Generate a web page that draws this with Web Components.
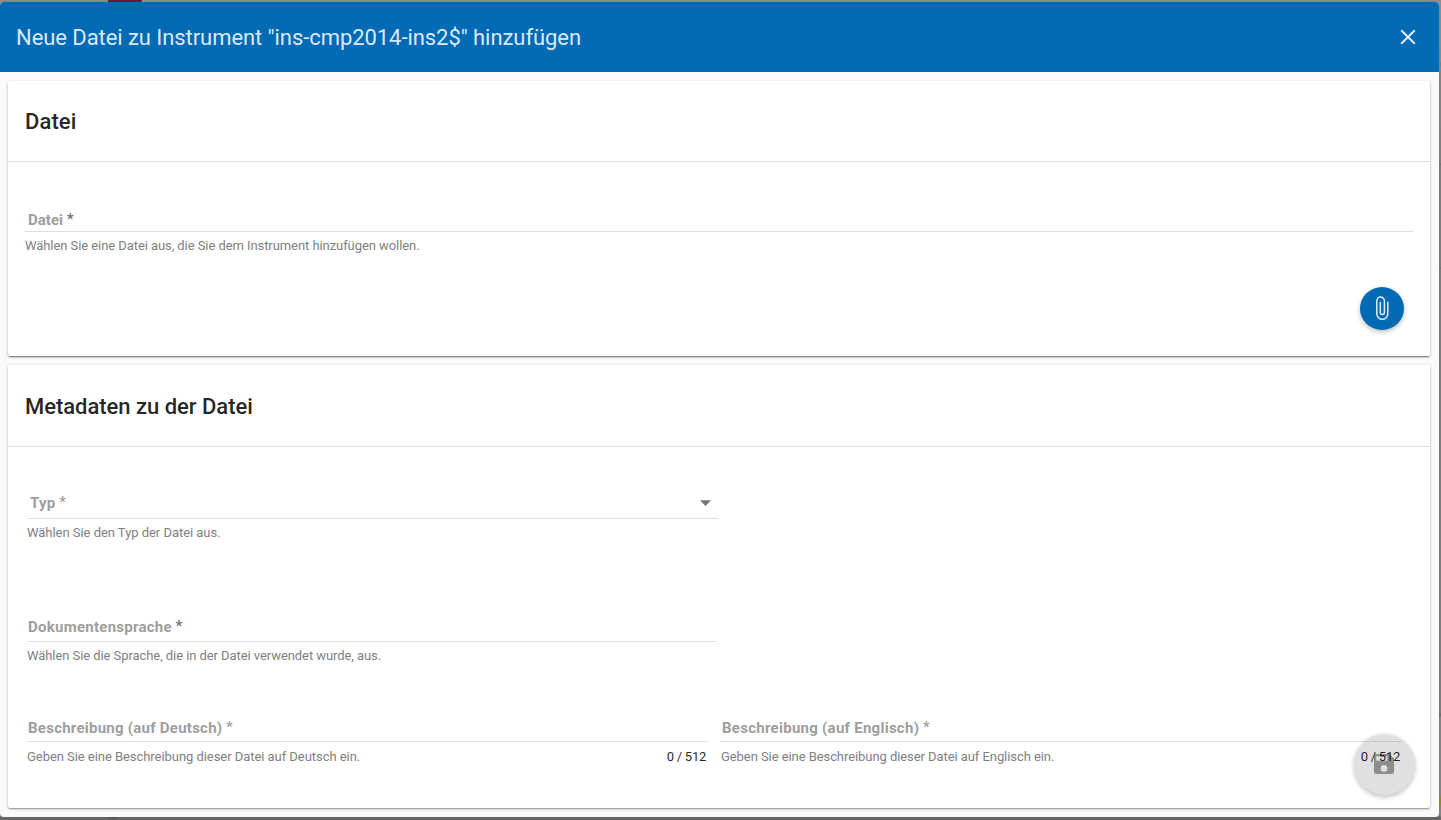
<!DOCTYPE html>
<html lang="de">
<head>
<meta charset="utf-8">
<title>Neue Datei hinzufügen</title>
<style>
html,body{margin:0;height:820px;overflow:hidden}
body{font-family:Roboto,"Liberation Sans",sans-serif;background:#878787;color:rgba(0,0,0,.87)}
</style>
</head>
<body>
<page-backdrop>
<app-dialog>
<span slot="title">Neue Datei zu Instrument "ins-cmp2014-ins2$" hinzufügen</span>
<form-card raised style="height:275px;--title-ls:.1px">
<span slot="title">Datei</span>
<form-field style="margin:49px 17px 0 17px;--gap:20px;--inset:3px;--ls:.02px" label="Datei" strong hint="Wählen Sie eine Datei aus, die Sie dem Instrument hinzufügen wollen."></form-field>
<attach-button></attach-button>
</form-card>
<form-card style="height:443px;--head:81px">
<span slot="title">Metadaten zu der Datei</span>
<form-field style="margin:47px 0 0 19px;width:691px;--gap:24px;--inset:3px;--hint-ls:-.035px" label="Typ" select hint="Wählen Sie den Typ der Datei aus."></form-field>
<form-field style="margin:77px 0 0 19px;width:690px;--gap:23px;--ls:.26px" label="Dokumentensprache" strong hint="Wählen Sie die Sprache, die in der Datei verwendet wurde, aus."></form-field>
<field-row>
<form-field style="--gap:22px;--drop:7px;--ls:.25px;--hint-ls:-.05px" label="Beschreibung (auf Deutsch)" counter="0 / 512" hint="Geben Sie eine Beschreibung dieser Datei auf Deutsch ein."></form-field>
<form-field style="--gap:22px;--drop:7px;--ls:.27px" label="Beschreibung (auf Englisch)" counter="0 / 512" hint="Geben Sie eine Beschreibung dieser Datei auf Englisch ein."></form-field>
</field-row>
</form-card>
<save-button slot="fab"></save-button>
</app-dialog>
</page-backdrop>
<script>
function define(name, html, setup) {
  customElements.define(name, class extends HTMLElement {
    connectedCallback() {
      if (this.shadowRoot) return;
      this.attachShadow({mode: 'open'}).innerHTML = html;
      if (setup) setup(this, this.shadowRoot);
    }
  });
}

define('page-backdrop', `<style>
:host{display:block;position:relative;height:820px;overflow:hidden;
 background:linear-gradient(#8d8d8d 0 3px,#8a8a8a 62px,#7b7b7b 63px 64px,#858585 65px,#808080 163px,#747474 164px 165px,#7e7e7e 166px 267px,#747474 268px,#7e7e7e 270px 713px,#6c6c6c 714px 716px,#858585 717px 816px,#676767 817px)}
i{position:absolute;display:block}
.red{left:108px;top:0;width:34px;height:3px;background:#761428}
.yel{right:0;top:795px;width:2px;height:11px;background:#8e8a3c}
.low{left:108px;top:817px;width:9px;height:3px;background:#5e5e5e}
</style><i class="red"></i><i class="yel"></i><i class="low"></i><slot></slot>`);

define('app-dialog', `<style>
:host{display:flex;flex-direction:column;position:relative;top:2px;width:1439px;height:815px;border-radius:4px;overflow:hidden;background:#fafafa;box-shadow:0 0 2px rgba(0,0,0,.1)}
header{display:flex;align-items:center;justify-content:space-between;flex:none;height:70px;box-sizing:border-box;padding:0 23px 0 16px;background:#006bb4;color:rgba(255,255,255,.87)}
h2{margin:2px 0 0;font-size:22px;font-weight:400;line-height:28px;letter-spacing:-.065px;white-space:nowrap}
button{border:0;padding:0;background:none;width:16px;height:16px;display:block}
svg{display:block}
main{display:flex;flex-direction:column;gap:9px;padding:9px 9px 9px 8px;position:relative;z-index:0}
</style>
<header><h2><slot name="title"></slot></h2><button aria-label="Schließen"><svg width="16" height="16" viewBox="0 0 16 16"><path d="M1.2 1.2 14.8 14.8M14.8 1.2 1.2 14.8" stroke="#fff" stroke-opacity=".87" stroke-width="2" fill="none"/></svg></button></header>
<main><slot></slot><slot name="fab"></slot></main>`);

define('form-card', `<style>
:host{display:flex;flex-direction:column;box-sizing:border-box;flex:none;background:#fff;border-radius:2px;box-shadow:0 1px 3px 0 rgba(0,0,0,.26),0 1px 1px 0 rgba(0,0,0,.14),0 2px 1px -1px rgba(0,0,0,.12)}
:host([raised]){box-shadow:0 1px 3px 0 rgba(0,0,0,.28),0 2px 1px -1px rgba(0,0,0,.22),0 2px 2px -1px rgba(0,0,0,.25)}
header{flex:none;display:flex;align-items:center;padding:2px 17px 0;height:calc(var(--head,80px) - 2px);border-bottom:1px solid #dfdfdf}
h3{margin:0;font-size:22px;font-weight:500;line-height:28px;letter-spacing:var(--title-ls,-.03px)}
</style><header><h3><slot name="title"></slot></h3></header><slot></slot>`);

define('field-row', `<style>
:host{display:grid;grid-template-columns:681px 681px;gap:13px;margin:55px 0 0 19px;position:relative;z-index:2}
</style><slot></slot>`);

define('form-field', `<style>
:host{display:block}
.top{display:flex;justify-content:space-between;height:var(--gap);border-bottom:1px solid rgba(0,0,0,.125);padding:0 7px 0 var(--inset,1px);line-height:18px;font-size:15px;color:#9e9e9e}
label{font-weight:700;letter-spacing:var(--ls,.23px);white-space:pre}
.star{font-weight:500;letter-spacing:0;position:relative;top:-1px}
:host([strong]) .star{color:#757575;font-weight:700}
svg{margin-top:6px}
.bottom{display:flex;justify-content:space-between;padding:var(--drop,6px) 2px 0 0;font-size:13px;line-height:16px;color:#808080;white-space:nowrap;letter-spacing:var(--hint-ls,-.07px)}
.count{color:rgba(0,0,0,.87);letter-spacing:-.25px}
</style><div class="top"><label><span class="name"></span><span class="star"> *</span></label></div>
<div class="bottom"><span class="hint"></span></div>`, (el, root) => {
  root.querySelector('.name').textContent = el.getAttribute('label');
  root.querySelector('.hint').textContent = el.getAttribute('hint');
  if (el.hasAttribute('counter')) {
    const c = document.createElement('span');
    c.className = 'count';
    c.textContent = el.getAttribute('counter');
    root.querySelector('.bottom').append(c);
  }
  if (el.hasAttribute('select')) {
    root.querySelector('.top').insertAdjacentHTML('beforeend',
      '<svg width="11" height="6" viewBox="0 0 11 6"><path d="M0 .3H11L5.5 6Z" fill="#757575"/></svg>');
  }
});

define('attach-button', `<style>
:host{display:block;align-self:flex-end;margin:33px 26px 0 0}
button{display:flex;align-items:center;justify-content:center;width:44px;height:43px;padding:0;border:0;border-radius:50%;background:#006bb4;box-shadow:0 2px 5px rgba(0,0,0,.26)}
svg{margin:-2px 0 0 0}
</style><button aria-label="Datei auswählen"><svg width="14" height="24" viewBox="0 0 14 24"><path d="M12.8 5.8V17.8A5.5 5.5 0 0 1 1.8 17.8V4.9A3.8 3.8 0 0 1 9.4 4.9V16.4A2.05 2.05 0 0 1 5.3 16.4V5.8" fill="none" stroke="#fff" stroke-opacity=".87" stroke-width="1.5"/></svg></button>`);

define('save-button', `<style>
:host{display:block;position:absolute;left:1354px;top:662px;z-index:1}
button{display:flex;align-items:center;justify-content:center;width:61px;height:61px;padding:0;border:0;border-radius:50%;background:#e0e0e0;box-shadow:0 2px 5px rgba(0,0,0,.26)}
svg{margin:-1px 2px 0 0}
</style><button aria-label="Speichern" disabled><svg width="20" height="20" viewBox="0 0 20 20"><path fill-rule="evenodd" d="M2.2 0H15.5L20 4.5V17.8A2.2 2.2 0 0 1 17.8 20H2.2A2.2 2.2 0 0 1 0 17.8V2.2A2.2 2.2 0 0 1 2.2 0ZM2.2 2.2V6.7H13.3V2.2ZM10 11.1A3.3 3.3 0 1 0 10 17.8A3.3 3.3 0 1 0 10 11.1Z" fill="#8d8d8d"/></svg></button>`);
</script>
</body>
</html>
